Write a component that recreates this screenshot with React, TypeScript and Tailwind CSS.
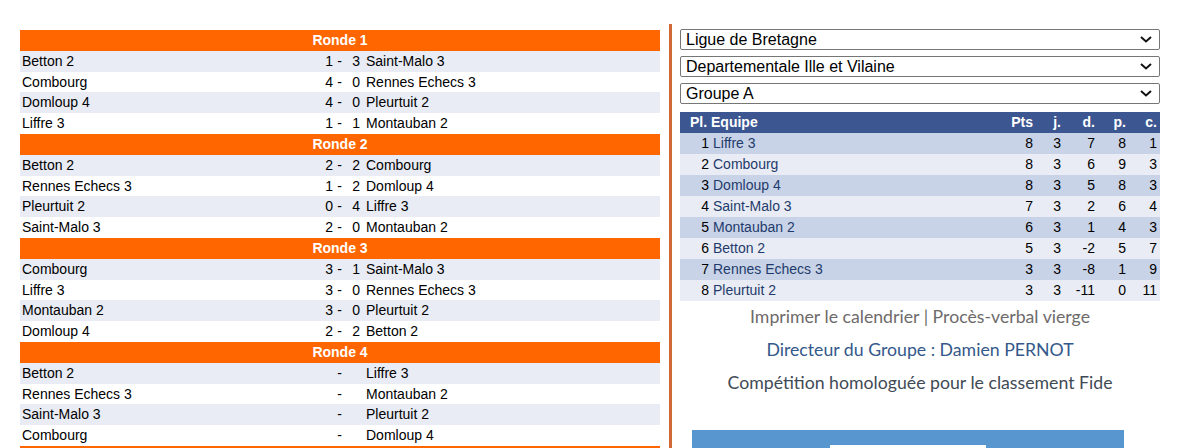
import React from 'react';

type Match = { home: string; hs?: number; as?: number; away: string };

const rounds: { name: string; matches: Match[] }[] = [
  {
    name: 'Ronde 1',
    matches: [
      { home: 'Betton 2', hs: 1, as: 3, away: 'Saint-Malo 3' },
      { home: 'Combourg', hs: 4, as: 0, away: 'Rennes Echecs 3' },
      { home: 'Domloup 4', hs: 4, as: 0, away: 'Pleurtuit 2' },
      { home: 'Liffre 3', hs: 1, as: 1, away: 'Montauban 2' },
    ],
  },
  {
    name: 'Ronde 2',
    matches: [
      { home: 'Betton 2', hs: 2, as: 2, away: 'Combourg' },
      { home: 'Rennes Echecs 3', hs: 1, as: 2, away: 'Domloup 4' },
      { home: 'Pleurtuit 2', hs: 0, as: 4, away: 'Liffre 3' },
      { home: 'Saint-Malo 3', hs: 2, as: 0, away: 'Montauban 2' },
    ],
  },
  {
    name: 'Ronde 3',
    matches: [
      { home: 'Combourg', hs: 3, as: 1, away: 'Saint-Malo 3' },
      { home: 'Liffre 3', hs: 3, as: 0, away: 'Rennes Echecs 3' },
      { home: 'Montauban 2', hs: 3, as: 0, away: 'Pleurtuit 2' },
      { home: 'Domloup 4', hs: 2, as: 2, away: 'Betton 2' },
    ],
  },
  {
    name: 'Ronde 4',
    matches: [
      { home: 'Betton 2', away: 'Liffre 3' },
      { home: 'Rennes Echecs 3', away: 'Montauban 2' },
      { home: 'Saint-Malo 3', away: 'Pleurtuit 2' },
      { home: 'Combourg', away: 'Domloup 4' },
    ],
  },
];

const standings = [
  { pl: 1, team: 'Liffre 3', pts: 8, j: 3, d: 7, p: 8, c: 1 },
  { pl: 2, team: 'Combourg', pts: 8, j: 3, d: 6, p: 9, c: 3 },
  { pl: 3, team: 'Domloup 4', pts: 8, j: 3, d: 5, p: 8, c: 3 },
  { pl: 4, team: 'Saint-Malo 3', pts: 7, j: 3, d: 2, p: 6, c: 4 },
  { pl: 5, team: 'Montauban 2', pts: 6, j: 3, d: 1, p: 4, c: 3 },
  { pl: 6, team: 'Betton 2', pts: 5, j: 3, d: -2, p: 5, c: 7 },
  { pl: 7, team: 'Rennes Echecs 3', pts: 3, j: 3, d: -8, p: 1, c: 9 },
  { pl: 8, team: 'Pleurtuit 2', pts: 3, j: 3, d: -11, p: 0, c: 11 },
];

const selects = ['Ligue de Bretagne', 'Departementale Ille et Vilaine', 'Groupe A'];

function Chevron() {
  return (
    <svg width="12" height="7" viewBox="0 0 12 7" className="shrink-0">
      <path d="M1 1l5 4.5L11 1" fill="none" stroke="#111" strokeWidth="2" />
    </svg>
  );
}

export default function App() {
  return (
    <div className="w-[1189px] h-[448px] overflow-hidden bg-white font-['Liberation_Sans',Arial,sans-serif] text-[14px] text-black">
      <div className="flex pt-[24px]">
        {/* Calendrier */}
        <div className="pl-[20px] pt-[6px]">
          <div className="w-[640px]">
            {rounds.map((r) => (
              <div key={r.name}>
                <div className="h-[20.8px] bg-[#ff6600] flex items-center justify-center text-white font-bold">
                  {r.name}
                </div>
                {r.matches.map((m, i) => (
                  <div
                    key={i}
                    className={`h-[20.8px] grid grid-cols-[298px_15px_13px_14px_1fr] items-center ${
                      i % 2 === 0 ? 'bg-[#e9ecf4]' : 'bg-white'
                    }`}
                  >
                    <span className="pl-[2px] whitespace-nowrap">{m.home}</span>
                    <span className="text-right">{m.hs ?? ''}</span>
                    <span className="text-center">-</span>
                    <span className="text-right">{m.as ?? ''}</span>
                    <span className="pl-[6px] whitespace-nowrap">{m.away}</span>
                  </div>
                ))}
              </div>
            ))}
            {/* ronde suivante, coupée par le bas */}
            <div className="h-[20.8px] bg-[#ff6600]" />
          </div>
        </div>

        {/* Separateur */}
        <div className="ml-[9px] w-[3px] h-[500px] bg-[#d06a36]" />

        {/* Classement */}
        <div className="ml-[8px] w-[480px] pt-[5px]">
          <div className="flex flex-col gap-[6px]">
            {selects.map((s) => (
              <div
                key={s}
                className="h-[21px] border border-[#767676] rounded-[2px] flex items-center justify-between pl-[5px] pr-[7px] text-[16px] leading-none"
              >
                <span>{s}</span>
                <Chevron />
              </div>
            ))}
          </div>

          <div className="mt-[8px]">
            <div className="h-[21px] bg-[#3b5690] text-white font-bold grid grid-cols-[29px_1fr_36px_28px_34px_31px_31px] items-center">
              <span className="col-span-2 pl-[10px]">Pl. Equipe</span>
              <span className="text-right pr-[3px]">Pts</span>
              <span className="text-right pr-[3px]">j.</span>
              <span className="text-right pr-[3px]">d.</span>
              <span className="text-right pr-[3px]">p.</span>
              <span className="text-right pr-[3px]">c.</span>
            </div>
            {standings.map((s, i) => (
              <div
                key={s.pl}
                className={`h-[21px] grid grid-cols-[29px_1fr_36px_28px_34px_31px_31px] items-center ${
                  i % 2 === 0 ? 'bg-[#c8d3e8]' : 'bg-[#e9ecf4]'
                }`}
              >
                <span className="text-right">{s.pl}</span>
                <span className="pl-[4px] text-[#1f3b6b]">{s.team}</span>
                <span className="text-right pr-[3px]">{s.pts}</span>
                <span className="text-right pr-[3px]">{s.j}</span>
                <span className="text-right pr-[3px]">{s.d}</span>
                <span className="text-right pr-[3px]">{s.p}</span>
                <span className="text-right pr-[3px]">{s.c}</span>
              </div>
            ))}
          </div>

          <div className="font-['Lato',sans-serif] text-[17.7px] text-center">
            <p className="h-[33px] flex items-center justify-center text-[#6e6a6a]">
              Imprimer le calendrier | Procès-verbal vierge
            </p>
            <p className="h-[33px] flex items-center justify-center text-[#34588a]">
              Directeur du Groupe : Damien PERNOT
            </p>
            <p className="h-[33px] flex items-center justify-center text-[#3f4a55]">
              Compétition homologuée pour le classement Fide
            </p>
          </div>

          <div className="mt-[30px] ml-[12px] w-[432px] h-[60px] bg-[#5896cf] pt-[15px] flex justify-center">
            <div className="w-[156px] h-[40px] bg-white" />
          </div>
        </div>
      </div>
    </div>
  );
}
